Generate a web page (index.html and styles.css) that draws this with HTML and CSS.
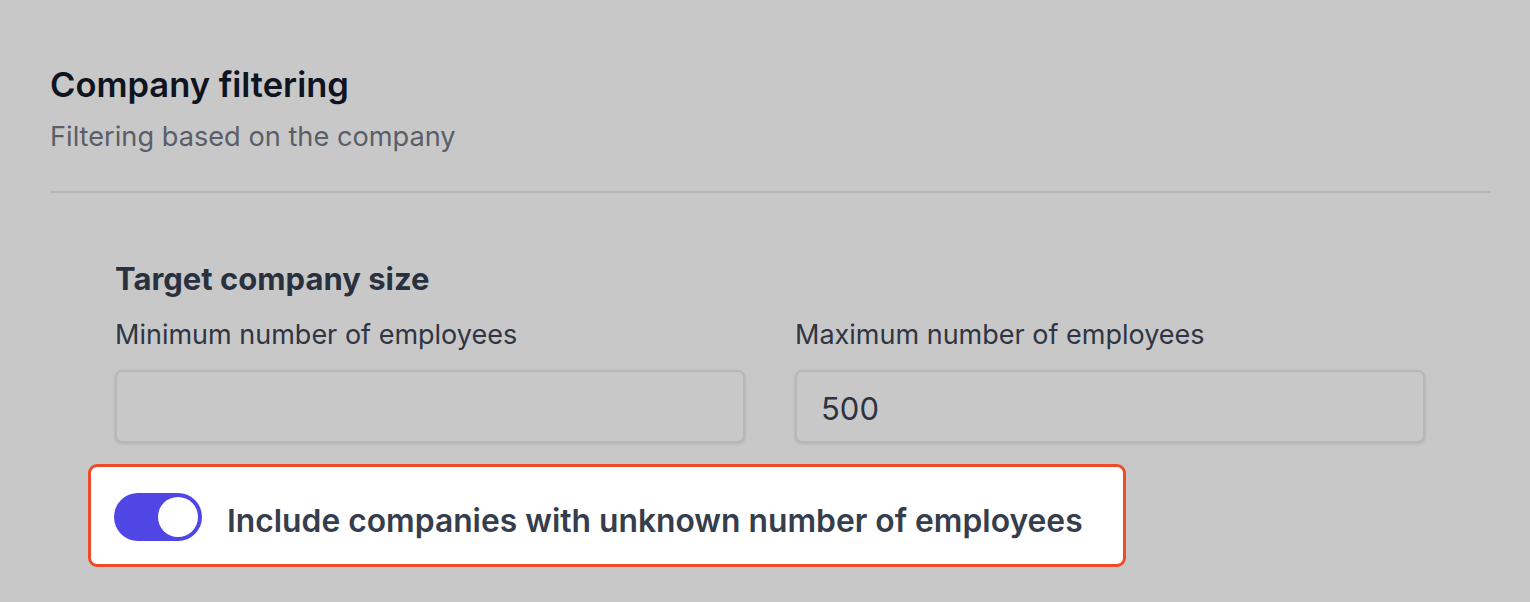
FILE: index.html
```html
<!DOCTYPE html>
<html lang="en">
<head>
<meta charset="utf-8">
<title>Company filtering</title>
<link rel="stylesheet" href="styles.css">
</head>
<body>
<main class="page">
  <header class="page-header">
    <h1 class="title">Company filtering</h1>
    <p class="subtitle">Filtering based on the company</p>
  </header>
  <hr class="divider">
  <section class="section">
    <h2 class="section-title">Target company size</h2>
    <div class="fields">
      <label class="field">
        <span class="field-label">Minimum number of employees</span>
        <input class="field-input" type="text" value="">
      </label>
      <label class="field">
        <span class="field-label">Maximum number of employees</span>
        <input class="field-input" type="text" value="500">
      </label>
    </div>
    <div class="highlight">
      <span class="toggle" role="switch" aria-checked="true"><span class="knob"></span></span>
      <span class="toggle-label">Include companies with unknown number of employees</span>
    </div>
    <h2 class="section-title next">Target company location</h2>
  </section>
</main>
</body>
</html>
```
FILE: styles.css
```css
* { box-sizing: border-box; }
html, body {
  margin: 0;
  padding: 0;
  background: #c8c8c8;
  height: 602px;
  overflow: hidden;
}
body {
  font-family: Inter, "Noto Sans", "Liberation Sans", sans-serif;
}
.page {
  padding: 65px 40px 0 50px;
}
.title {
  margin: 0;
  font-size: 34.5px;
  line-height: 40px;
  font-weight: 600;
  color: #0f1421;
}
.subtitle {
  margin: 16px 0 0;
  font-size: 27.2px;
  line-height: 32px;
  font-weight: 400;
  color: #5a5e69;
}
.divider {
  margin: 38px 0 0;
  border: 0;
  height: 2px;
  background: #b5b5b9;
}
.section {
  padding: 68px 65px 0 65px;
}
.section-title {
  margin: 0;
  font-size: 31px;
  line-height: 36px;
  font-weight: 700;
  color: #2a313e;
}
.fields {
  margin-top: 22px;
  display: grid;
  grid-template-columns: 1fr 1fr;
  column-gap: 50px;
}
.field {
  display: flex;
  flex-direction: column;
  gap: 19px;
}
.field-label {
  font-size: 27px;
  line-height: 32px;
  color: #2f3543;
}
.field-input {
  height: 73px;
  width: 100%;
  padding: 3px 24px 0;
  border: 2px solid #b6b6bb;
  border-radius: 7px;
  background: #c8c8c8;
  box-shadow: 0 1px 3px rgba(0, 0, 0, 0.12);
  font-family: inherit;
  font-size: 31px;
  color: #2c3341;
  outline: none;
}
.highlight {
  margin: 21px 0 0 -27px;
  display: inline-flex;
  align-items: center;
  gap: 25px;
  padding: 26px 40px 23px 23px;
  background: #ffffff;
  border: 3px solid #f1492a;
  border-radius: 9px;
}
.toggle {
  width: 88px;
  height: 48px;
  border-radius: 24px;
  background: #4f46e5;
  padding: 4px;
  display: flex;
  justify-content: flex-end;
  flex: none;
}
.knob {
  width: 40px;
  height: 40px;
  border-radius: 50%;
  background: #ffffff;
}
.toggle-label {
  padding-top: 8px;
  font-size: 31.8px;
  line-height: 36px;
  font-weight: 600;
  color: #363d4c;
  white-space: nowrap;
}
.section-title.next {
  margin-top: 31px;
}
```
